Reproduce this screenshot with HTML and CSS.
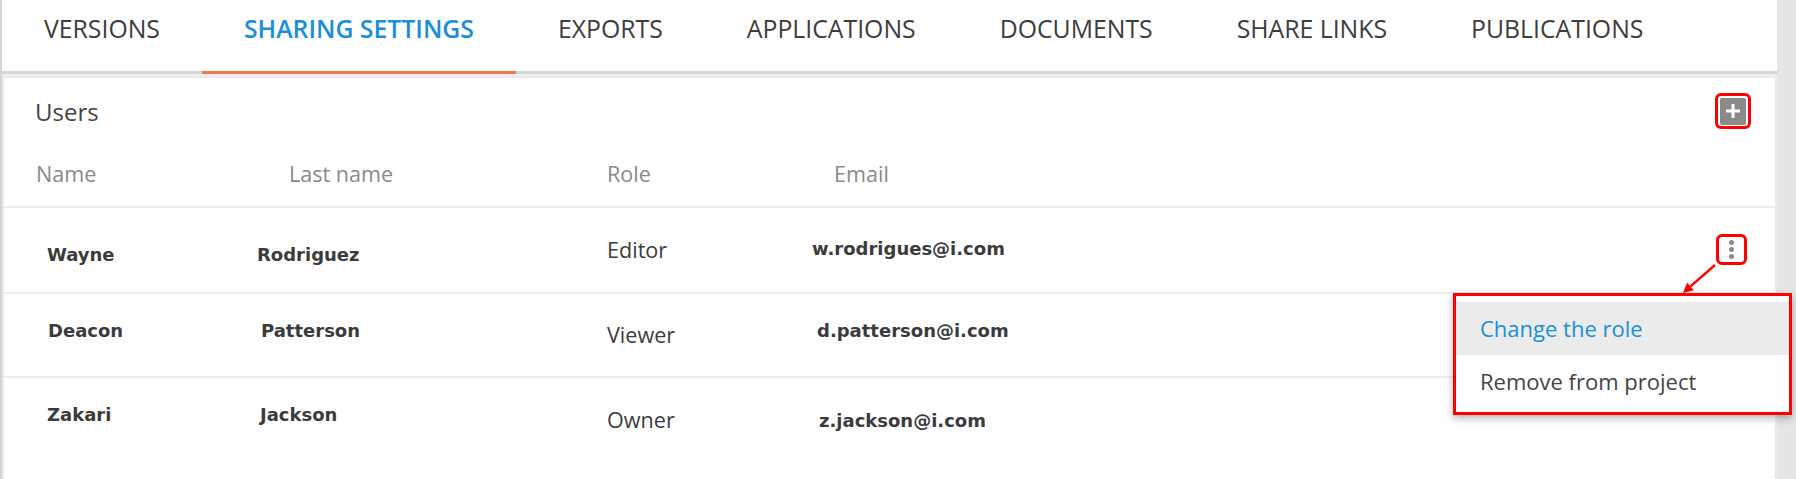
FILE: index.html
```html
<!DOCTYPE html>
<html>
<head>
<meta charset="utf-8">
<title>Sharing settings</title>
<link rel="stylesheet" href="styles.css">
</head>
<body>
<div class="app">
    <nav class="tabs">
        <a class="tab">VERSIONS</a>
        <a class="tab active">SHARING SETTINGS</a>
        <a class="tab">EXPORTS</a>
        <a class="tab">APPLICATIONS</a>
        <a class="tab">DOCUMENTS</a>
        <a class="tab">SHARE LINKS</a>
        <a class="tab">PUBLICATIONS</a>
    </nav>

    <section class="panel">
        <div class="panelHead">
            <h2 class="panelTitle">Users</h2>
            <span class="mark markAdd">
                <button class="btnAdd" type="button" title="Add user">
                    <svg width="16" height="16" viewBox="0 0 16 16">
                        <path d="M8 1v14M1 8h14" stroke="#fff" stroke-width="3" fill="none"/>
                    </svg>
                </button>
            </span>
        </div>

        <div class="headRow">
            <div class="hName">Name</div>
            <div class="hLast">Last name</div>
            <div class="hRole">Role</div>
            <div class="hEmail">Email</div>
        </div>

        <div class="userRow row1">
            <div class="cName">Wayne</div>
            <div class="cLast">Rodriguez</div>
            <div class="cRole">Editor</div>
            <div class="cEmail">w.rodrigues@i.com</div>
            <div class="cActions">
                <span class="mark markMore">
                    <button class="btnMore" type="button" title="More">
                        <i></i><i></i><i></i>
                    </button>
                </span>
            </div>
        </div>

        <div class="userRow row2">
            <div class="cName">Deacon</div>
            <div class="cLast">Patterson</div>
            <div class="cRole">Viewer</div>
            <div class="cEmail">d.patterson@i.com</div>
        </div>

        <div class="userRow row3">
            <div class="cName">Zakari</div>
            <div class="cLast">Jackson</div>
            <div class="cRole">Owner</div>
            <div class="cEmail">z.jackson@i.com</div>
        </div>

        <!-- annotation arrow from the kebab button to the menu -->
        <svg class="pointer" width="50" height="40" viewBox="0 0 50 40">
            <line x1="40" y1="5" x2="15.5" y2="26.4" stroke="#f00" stroke-width="2.4"/>
            <polygon points="8,33 18.8,30.2 12.2,22.6" fill="#f00"/>
        </svg>

        <div class="menu">
            <div class="menuItem hover">Change the role</div>
            <div class="menuItem">Remove from project</div>
        </div>
    </section>
</div>
</body>
</html>
```

FILE: styles.css
```css
html, body{
    margin: 0;
    padding: 0;
    height: 100%;
    overflow: hidden;
}

body{
    background-color: #e6e6e6;
    font-family: "Open Sans", "Liberation Sans", sans-serif;
    color: #3c3c3c;
}

.app{
    width: 1775px;
    height: 100%;
    border-left: 2px solid #d4d4d4;
    background-color: #efefef;
    display: flex;
    flex-direction: column;
}

/* tabs */
.tabs{
    display: flex;
    height: 71px;
    background-color: #fff;
    border-bottom: 3px solid #d6d6d6;
}

.tab{
    display: block;
    height: 71px;
    box-sizing: border-box;
    padding: 12px 42px 0;
    margin-bottom: -3px;
    border-bottom: 3px solid transparent;
    font-size: 24.8px;
    line-height: 33px;
    color: #3d3d3d;
    cursor: pointer;
    white-space: nowrap;
}

.tab.active{
    color: #1a8fd9;
    font-weight: 600;
    border-bottom-color: #ef7b48;
    height: 74px;
}

/* panel */
.panel{
    position: relative;
    flex: 1;
    margin-top: 2px;
    background-color: #fff;
    border: 2px solid #ebebeb;
    border-bottom: none;
}

.panelHead{
    display: flex;
    align-items: center;
    justify-content: space-between;
    height: 36px;
    padding: 15px 24px 0 31px;
}

.panelTitle{
    margin: 0;
    font-size: 24px;
    font-weight: 400;
    line-height: 33px;
    color: #444;
}

.mark{
    display: flex;
    align-items: center;
    justify-content: center;
    box-sizing: border-box;
    border: 3px solid #f00;
    border-radius: 6px;
}

.markAdd{
    width: 36px;
    height: 36px;
}

.btnAdd{
    display: flex;
    align-items: center;
    justify-content: center;
    width: 26px;
    height: 27px;
    padding: 0;
    border: none;
    border-radius: 2px;
    background-color: #8a8a8a;
    cursor: pointer;
}

/* table header */
.headRow{
    display: flex;
    padding: 31px 0 17px 32px;
    border-bottom: 2px solid #eeeeee;
    font-size: 21.6px;
    line-height: 28.6px;
    color: #8a8a8a;
}

.hName{ width: 253px; }
.hLast{ width: 318px; }
.hRole{ width: 227px; }

/* user rows */
.userRow{
    display: flex;
    align-items: flex-start;
    box-sizing: border-box;
    padding: 0 28px 0 43px;
    border-bottom: 2px solid #eeeeee;
}

.row1{ height: 86px; }
.row2{ height: 84px; }
.row3{ border-bottom: none; }

.cName, .cLast, .cEmail{
    box-sizing: border-box;
    padding-top: 26px;
    font-family: "DejaVu Sans", Verdana, sans-serif;
    font-weight: 700;
    font-size: 18px;
    line-height: 21px;
    color: #3b3b3b;
}

.cName{ width: 210px; }
.cLast{ width: 350px; }

.cRole{
    width: 205px;
    box-sizing: border-box;
    padding-top: 27px;
    font-size: 21.6px;
    line-height: 28px;
    color: #3c3c3c;
}

.row1 .cName, .row1 .cLast{ padding-top: 36px; }
.row1 .cRole{ padding-top: 28px; }
.row1 .cEmail{ padding-top: 30px; }

.row2 .cName{ padding-left: 1px; }
.row2 .cLast{ padding-left: 4px; }
.row2 .cEmail{ padding-left: 5px; }

.row3 .cLast{ padding-left: 3px; }
.row3 .cRole{ padding-top: 28px; }
.row3 .cEmail{ padding-top: 32px; padding-left: 7px; }

.cActions{
    margin-left: auto;
    padding-top: 26px;
}

.markMore{
    width: 31px;
    height: 31px;
}

.btnMore{
    display: flex;
    flex-direction: column;
    align-items: center;
    gap: 2px;
    padding: 0;
    border: none;
    background: transparent;
    cursor: pointer;
}

.btnMore i{
    display: block;
    width: 5px;
    height: 5px;
    border-radius: 50%;
    background-color: #8a8a8a;
}

/* context menu + annotation */
.pointer{
    position: absolute;
    left: 1671px;
    top: 182px;
}

.menu{
    position: absolute;
    left: 1449px;
    top: 215px;
    width: 339px;
    box-sizing: border-box;
    padding: 6px 0 4px;
    border: 3px solid #f00;
    background-color: #fff;
    box-shadow: 0 3px 8px rgba(0, 0, 0, 0.3);
}

.menuItem{
    height: 53px;
    padding-left: 24px;
    font-size: 22px;
    line-height: 53px;
    color: #444;
    cursor: pointer;
    white-space: nowrap;
}

.menuItem.hover{
    background-color: #ebebeb;
    color: #1a8fd9;
}
```
